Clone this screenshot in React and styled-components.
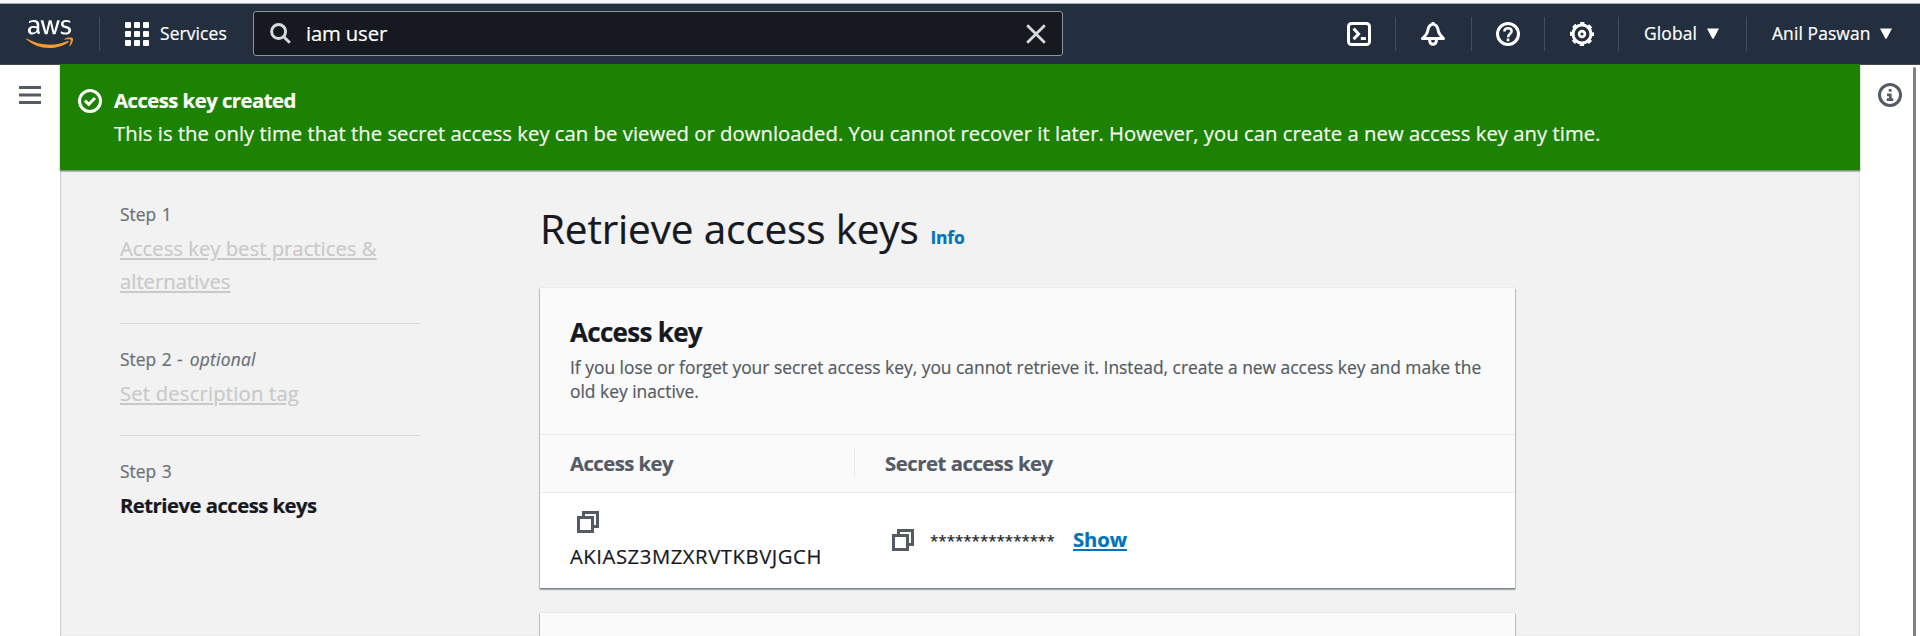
import React from "react";
import styled, { createGlobalStyle } from "styled-components";
import { FaAws } from "react-icons/fa";

const GlobalStyle = createGlobalStyle`
  * { box-sizing: border-box; }
  body {
    margin: 0;
    background: #f2f2f2;
    font-family: "Open Sans", "Noto Sans", sans-serif;
    font-size: 20.3px;
    line-height: 33px;
    color: #16191f;
    overflow: hidden;
    -webkit-text-stroke: 0.2px;
  }
  h1, h2, p, ol { margin: 0; padding: 0; }
`;

const Page = styled.div`
  display: flex;
  flex-direction: column;
  height: 636px;
  overflow: hidden;
`;

const TopStrip = styled.div`
  flex: none;
  height: 4px;
  background: #f6f6f8;
  border-bottom: 1px solid #a9acb3;
`;

const NavBar = styled.header`
  flex: none;
  display: flex;
  align-items: center;
  height: 61px;
  padding: 0 28px 1px 26px;
  background: #232f3e;
  border-bottom: 1px solid #414a4c;
  color: #fff;
`;

const NavDivider = styled.span`
  flex: none;
  width: 1px;
  height: 34px;
  background: #414d5c;
  margin: 0 ${(p) => p.$after}px 0 ${(p) => p.$before}px;
`;

const NavLabel = styled.span`
  font-size: 17.4px;
  font-weight: 500;
  white-space: nowrap;
  letter-spacing: ${(p) => p.$spacing || 0}px;
  width: ${(p) => p.$width}px;
`;

const ServicesButton = styled.div`
  display: flex;
  align-items: center;
  gap: 11px;
  width: 128px;
`;

const SearchBox = styled.div`
  display: flex;
  align-items: center;
  width: 810px;
  height: 45px;
  padding: 0 16px;
  border: 1px solid #8d9496;
  border-radius: 3px;
  background: #16191f;
`;

const SearchText = styled.span`
  flex: 1;
  margin-left: 15px;
  letter-spacing: -0.15px;
`;

const NavTools = styled.div`
  display: flex;
  align-items: center;
  margin-left: auto;
`;

const Body = styled.div`
  flex: 1;
  display: flex;
  min-height: 0;
  background: #fff;
`;

const SideRail = styled.aside`
  flex: none;
  width: 60px;
  display: flex;
  justify-content: center;
  padding-top: 18px;
  color: #545b64;
`;

const RightRail = styled(SideRail)`
  justify-content: space-between;
  align-items: flex-start;
  padding: 2px 4px 0 18px;
  > svg { margin-top: 16px; }
`;

const ScrollThumb = styled.span`
  width: 3px;
  height: 100%;
  border-radius: 2px 2px 0 0;
  background: #808080;
`;

const Main = styled.main`
  flex: 1;
  display: flex;
  flex-direction: column;
  background: #f2f2f2;
  box-shadow: inset 1px 0 1px #c4c9cb, inset -1px 0 1px #dfe2e2;
`;

const Flash = styled.section`
  flex: none;
  display: flex;
  gap: 12px;
  height: 106px;
  margin-top: -1px;
  padding: 20px 18px;
  background: #1d8102;
  color: #fff;
  box-shadow: 0 1px 1px #7f9286, 0 2px 1px #c0c6c8;
  > svg { margin-top: 5px; }
`;

const FlashTitle = styled.div`
  font-weight: 700;
  letter-spacing: -0.52px;
`;

const FlashText = styled.p`
  white-space: nowrap;
  letter-spacing: 0.02px;
  color: #f4faf2;
`;

const Wizard = styled.div`
  display: flex;
  padding: 32px 60px 0;
`;

const Steps = styled.ol`
  list-style: none;
  width: 300px;
  margin-right: 120px;
`;

const Step = styled.li`
  padding-bottom: 25px;
  margin-bottom: 23px;
  border-bottom: 1px solid ${(p) => (p.$last ? "transparent" : "#d5d9d9")};
`;

const StepNumber = styled.div`
  font-size: 17.4px;
  line-height: 24px;
  margin-bottom: 6px;
  color: #687078;
  word-spacing: 1px;
  em { margin-left: 1.5px; letter-spacing: 0.25px; }
`;

const StepLink = styled.span`
  color: #c9c9c9;
  text-decoration: underline;
  text-decoration-thickness: 2px;
  text-underline-offset: 2px;
  letter-spacing: ${(p) => p.$spacing}px;
`;

const StepCurrent = styled.div`
  font-weight: 700;
  letter-spacing: -0.52px;
`;

const Content = styled.div`
  width: 975px;
`;

const PageHeading = styled.div`
  display: flex;
  align-items: baseline;
  gap: 12px;
  height: 86px;
`;

const Title = styled.h1`
  font-size: 40.5px;
  font-weight: 400;
  line-height: 53px;
  letter-spacing: -0.17px;
`;

const InfoLink = styled.a`
  font-size: 17.4px;
  font-weight: 700;
  letter-spacing: -0.2px;
  color: #0073bb;
`;

const Card = styled.section`
  background: #fff;
  margin-bottom: 25px;
  box-shadow: 0 1px 1px #7f8b8e, 0 2px 1px #a9b2b4, 1px 1px 1px #ccd2d3, -1px 1px 1px #ccd2d3, 0 -1px 0 #eaeaea;
`;

const CardHeader = styled.div`
  height: 147px;
  padding: 28px 30px 0;
  background: #fafafa;
  border-bottom: 1px solid #e9ebeb;
`;

const CardTitle = styled.h2`
  font-size: 26px;
  font-weight: 700;
  line-height: 33px;
  letter-spacing: -0.7px;
`;

const CardDescription = styled.p`
  margin-top: 6px;
  font-size: 17.4px;
  line-height: 24px;
  color: #545b64;
`;

const Row = styled.div`
  display: grid;
  grid-template-columns: 315px 1fr;
  align-items: center;
`;

const HeadRow = styled(Row)`
  height: 58px;
  padding-bottom: 1px;
  background: #fafafa;
  border-bottom: 1px solid #e9ebeb;
`;

const HeadCell = styled.div`
  padding-left: 30px;
  font-weight: 700;
  letter-spacing: ${(p) => p.$spacing}px;
  color: #545b64;
  border-right: ${(p) => (p.$divided ? "1px solid #e9ebeb" : "none")};
  line-height: 29px;
`;

const DataRow = styled(Row)`
  height: 95px;
`;

const KeyCell = styled.div`
  padding: 0 0 0 30px;
  svg { display: block; margin: 3px 0 7px 7px; }
`;

const KeyValue = styled.div`
  letter-spacing: 0.55px;
  white-space: nowrap;
`;

const SecretCell = styled.div`
  display: flex;
  align-items: center;
  padding-left: 37px;
  > svg { margin-top: -1px; }
`;

const SecretMask = styled.span`
  width: 127px;
  margin: 0 16px 0 16px;
  font-size: 15.1px;
  line-height: 29px;
`;

const ShowLink = styled.a`
  margin-top: -3px;
  font-weight: 700;
  letter-spacing: -0.1px;
  color: #0073bb;
  text-decoration: underline;
  text-decoration-thickness: 2px;
  text-underline-offset: 2px;
`;

const Glyph = ({ size = 24, children, weight = 2 }) => (
  <svg width={size} height={size} viewBox="0 0 16 16" fill="none" stroke="currentColor" strokeWidth={weight} strokeLinejoin="round">
    {children}
  </svg>
);

const LogoBox = styled.div`
  flex: none;
  width: 47px;
  height: 38px;
  display: flex;
  svg:last-child { width: 47px; height: 38px; }
`;

const AwsLogo = () => (
  <LogoBox>
    <svg width="0" height="0">
      <defs>
        <linearGradient id="awsFill" gradientUnits="userSpaceOnUse" x1="0" y1="0" x2="0" y2="512">
          <stop offset="0.585" stopColor="#fff" />
          <stop offset="0.585" stopColor="#f79b2c" />
        </linearGradient>
      </defs>
    </svg>
    <FaAws fill="url(#awsFill)" />
  </LogoBox>
);

const GridIcon = () => (
  <svg width="24" height="24" viewBox="0 0 24 24" fill="#fff">
    {[0, 9, 18].map((y) => [0, 9, 18].map((x) => <rect key={`${x}-${y}`} x={x} y={y} width="6" height="6" rx="1" />))}
  </svg>
);

const SearchIcon = () => (
  <svg width="21" height="21" viewBox="0 0 21 21" fill="none" stroke="#d5dbdb" strokeWidth="3">
    <circle cx="8.6" cy="8.6" r="7" />
    <path d="M13.5 13.5 19.8 19.8" />
  </svg>
);

const CloseIcon = () => (
  <svg width="20" height="20" viewBox="0 0 20 20" fill="none" stroke="#d5dbdb" strokeWidth="2.8">
    <path d="M1.2 1.2 18.8 18.8M18.8 1.2 1.2 18.8" />
  </svg>
);

const CloudShellIcon = () => (
  <Glyph>
    <rect x="1" y="1" width="14" height="14" rx="2" />
    <path d="M4.4 4.4 7.7 8 4.4 11.4M9.2 11h3.4" strokeLinejoin="miter" />
  </Glyph>
);

const BellIcon = () => (
  <Glyph>
    <path d="M8 1.4C6 1.8 4.9 3.2 4.6 5.4 4.2 8 3 9.2 1 11H15C13 9.2 11.8 8 11.4 5.4 11.1 3.2 10 1.8 8 1.4ZM8 0v1.4M5.8 11.5v1.2a2.2 2.2 0 0 0 4.4 0v-1.2" />
  </Glyph>
);

const HelpIcon = () => (
  <Glyph>
    <circle cx="8" cy="8" r="7" />
    <path d="M5.6 6.4C5.6 4.9 6.6 4.1 8 4.1s2.4.9 2.4 2.1c0 1.6-2.3 1.8-2.3 3.9M8 11v1.8" strokeWidth="1.7" />
  </Glyph>
);

const GearIcon = () => (
  <Glyph>
    <circle cx="8" cy="8" r="6" />
    <circle cx="8" cy="8" r="7.3" strokeWidth="1.5" strokeDasharray="2.9 2.834" strokeDashoffset="1.45" />
    <circle cx="8" cy="8" r="1.9" strokeWidth="1.8" />
  </Glyph>
);

const MenuIcon = () => (
  <svg width="22" height="24" viewBox="0 0 22 24" stroke="currentColor" strokeWidth="3">
    <path d="M0 4.5h22M0 12h22M0 19.5h22" />
  </svg>
);

const CheckIcon = () => (
  <Glyph>
    <circle cx="8" cy="8" r="7" />
    <path d="M4.6 7.7 7.2 10.2 11.3 6" strokeLinejoin="miter" />
  </Glyph>
);

const InfoIcon = () => (
  <Glyph>
    <circle cx="8" cy="8" r="7" />
    <path d="M7.2 4.9h1.8M6 7.9h2.2v3.2M5.8 11.1h4.4" strokeWidth="1.8" strokeLinejoin="miter" />
  </Glyph>
);

const CopyIcon = () => (
  <svg width="22" height="22" viewBox="0 0 22 22" fill="none" stroke="#545b64" strokeWidth="3">
    <rect x="1.5" y="6.5" width="14" height="14" />
    <path d="M6.5 6.5v-5h14v14h-5" />
  </svg>
);

const Caret = () => (
  <svg width="12" height="11" viewBox="0 0 12 11" fill="#fff">
    <path d="M0 .5h12L6.8 10.2q-.8 1-1.6 0Z" />
  </svg>
);

export default function App() {
  return (
    <Page>
      <GlobalStyle />
      <TopStrip />
      <NavBar>
        <AwsLogo />
        <NavDivider $before={26} $after={25} />
        <ServicesButton>
          <GridIcon />
          <NavLabel $spacing={0.12}>Services</NavLabel>
        </ServicesButton>
        <SearchBox>
          <SearchIcon />
          <SearchText>iam user</SearchText>
          <CloseIcon />
        </SearchBox>
        <NavTools>
          <CloudShellIcon />
          <NavDivider $before={24} $after={25} />
          <BellIcon />
          <NavDivider $before={26} $after={24} />
          <HelpIcon />
          <NavDivider $before={24} $after={25} />
          <GearIcon />
          <NavDivider $before={24} $after={25} />
          <NavLabel $width={63} $spacing={0.13}>Global</NavLabel>
          <Caret />
          <NavDivider $before={27} $after={25} />
          <NavLabel $width={108} $spacing={0.12}>Anil Paswan</NavLabel>
          <Caret />
        </NavTools>
      </NavBar>
      <Body>
        <SideRail><MenuIcon /></SideRail>
        <Main>
          <Flash>
            <CheckIcon />
            <div>
              <FlashTitle>Access key created</FlashTitle>
              <FlashText>
                This is the only time that the secret access key can be viewed or downloaded. You cannot recover it later. However, you can create a new access key any time.
              </FlashText>
            </div>
          </Flash>
          <Wizard>
            <Steps>
              <Step>
                <StepNumber>Step 1</StepNumber>
                <StepLink $spacing={0}>Access key best practices &amp; alternatives</StepLink>
              </Step>
              <Step>
                <StepNumber>Step 2 - <em>optional</em></StepNumber>
                <StepLink $spacing={0.17}>Set description tag</StepLink>
              </Step>
              <Step $last>
                <StepNumber>Step 3</StepNumber>
                <StepCurrent>Retrieve access keys</StepCurrent>
              </Step>
            </Steps>
            <Content>
              <PageHeading>
                <Title>Retrieve access keys</Title>
                <InfoLink>Info</InfoLink>
              </PageHeading>
              <Card>
                <CardHeader>
                  <CardTitle>Access key</CardTitle>
                  <CardDescription>
                    If you lose or forget your secret access key, you cannot retrieve it. Instead, create a new access key and make the old key inactive.
                  </CardDescription>
                </CardHeader>
                <HeadRow>
                  <HeadCell $divided $spacing={-0.53}>Access key</HeadCell>
                  <HeadCell $spacing={-0.46}>Secret access key</HeadCell>
                </HeadRow>
                <DataRow>
                  <KeyCell>
                    <CopyIcon />
                    <KeyValue>AKIASZ3MZXRVTKBVJGCH</KeyValue>
                  </KeyCell>
                  <SecretCell>
                    <CopyIcon />
                    <SecretMask>***************</SecretMask>
                    <ShowLink>Show</ShowLink>
                  </SecretCell>
                </DataRow>
              </Card>
              <Card>
                <CardHeader />
              </Card>
            </Content>
          </Wizard>
        </Main>
        <RightRail>
          <InfoIcon />
          <ScrollThumb />
        </RightRail>
      </Body>
    </Page>
  );
}
